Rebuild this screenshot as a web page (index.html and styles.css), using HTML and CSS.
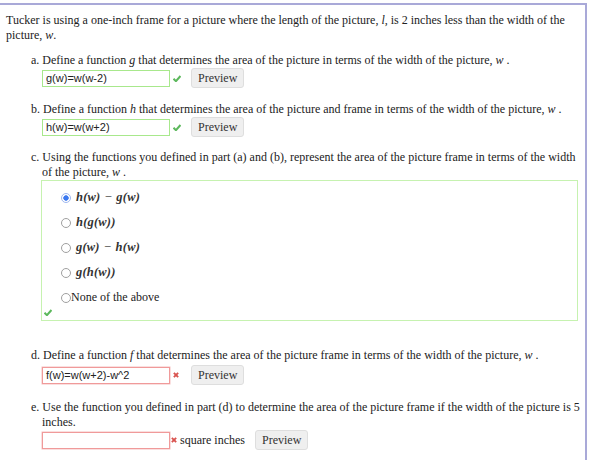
FILE: index.html
```html
<!DOCTYPE html>
<html>
<head>
<meta charset="utf-8">
<link rel="stylesheet" href="styles.css">
</head>
<body>
<div class="frame">
  <p class="intro">Tucker is using a one-inch frame for a picture where the length of the picture, <i>l</i>, is 2 inches less than the width of the picture, <i class="mv">w</i>.</p>

  <div class="part part-a">
    <p class="q">a. Define a function <i class="mv">g</i> that determines the area of the picture in terms of the width of the picture, <i class="mv">w</i> .</p>
    <div class="row">
      <span class="inp ok">g(w)=w(w-2)</span>
      <span class="mark check"><svg width="8" height="7" viewBox="0 0 9 8"><path d="M0.5 4.2 L3.3 7 L8.5 1.2" fill="none" stroke="#5cb85c" stroke-width="2.4"/></svg></span>
      <span class="btn">Preview</span>
    </div>
  </div>

  <div class="part part-b">
    <p class="q">b. Define a function <i class="mv">h</i> that determines the area of the picture and frame in terms of the width of the picture, <i class="mv">w</i> .</p>
    <div class="row">
      <span class="inp ok">h(w)=w(w+2)</span>
      <span class="mark check"><svg width="8" height="7" viewBox="0 0 9 8"><path d="M0.5 4.2 L3.3 7 L8.5 1.2" fill="none" stroke="#5cb85c" stroke-width="2.4"/></svg></span>
      <span class="btn">Preview</span>
    </div>
  </div>

  <div class="part part-c">
    <p class="q">c. Using the functions you defined in part (a) and (b), represent the area of the picture frame in terms of the width of the picture, <i class="mv">w</i> .</p>
    <div class="choices">
      <label class="opt"><span class="radio on"></span><span class="math">h(w) <span class="op">−</span> g(w)</span></label>
      <label class="opt"><span class="radio"></span><span class="math">h(g(w))</span></label>
      <label class="opt"><span class="radio"></span><span class="math">g(w) <span class="op">−</span> h(w)</span></label>
      <label class="opt"><span class="radio"></span><span class="math">g(h(w))</span></label>
      <label class="opt none"><span class="radio"></span><span class="txt">None of the above</span></label>
      <span class="mark check chk-c"><svg width="8" height="7" viewBox="0 0 9 8"><path d="M0.5 4.2 L3.3 7 L8.5 1.2" fill="none" stroke="#5cb85c" stroke-width="2.4"/></svg></span>
    </div>
  </div>

  <div class="part part-d">
    <p class="q">d. Define a function <i class="mv">f</i> that determines the area of the picture frame in terms of the width of the picture, <i class="mv">w</i> .</p>
    <div class="row row-d">
      <span class="inp bad">f(w)=w(w+2)-w^2</span>
      <span class="mark cross"><svg width="6" height="6" viewBox="0 0 7 7"><path d="M1 1 L6 6 M6 1 L1 6" fill="none" stroke="#d9534f" stroke-width="2.2"/></svg></span>
      <span class="btn">Preview</span>
    </div>
  </div>

  <div class="part part-e">
    <p class="q">e. Use the function you defined in part (d) to determine the area of the picture frame if the width of the picture is 5 inches.</p>
    <div class="row">
      <span class="inp bad"></span>
      <span class="mark cross tight"><svg width="6" height="6" viewBox="0 0 7 7"><path d="M1 1 L6 6 M6 1 L1 6" fill="none" stroke="#d9534f" stroke-width="2.2"/></svg></span>
      <span class="unit">square inches</span>
      <span class="btn">Preview</span>
    </div>
  </div>
</div>
</body>
</html>
```
FILE: styles.css
```css
html, body {
  margin: 0;
  padding: 0;
  background: #ffffff;
}

body {
  font-family: "Liberation Serif", "Times New Roman", serif;
  font-size: 12px;
  line-height: 15px;
  color: #222222;
}

.frame {
  margin: 3px 3px 0 -2px;
  border: 2px solid #a9a9d8;
  border-bottom: none;
  padding: 8px 4px 40px 6px;
  height: 460px;
  box-sizing: border-box;
}

p {
  margin: 0;
}

.mv {
  font-style: italic;
}

.intro {
  padding-right: 13px;
}

.part {
  padding-left: 36px;
}

.q {
  text-indent: -11px;
}

.part-a {
  margin-top: 10px;
}

.part-b {
  margin-top: 14px;
}

.part-c {
  margin-top: 13px;
}

.part-c .q {
  padding-right: 0;
}

.part-d {
  margin-top: 27px;
}

.part-e {
  margin-top: 15px;
}

.row {
  display: flex;
  align-items: center;
  height: 20px;
}

.row-d {
  margin-top: 2px;
}

.inp {
  display: block;
  box-sizing: border-box;
  width: 128px;
  height: 17px;
  padding: 0 3px;
  font-family: "Liberation Sans", Arial, sans-serif;
  font-size: 11px;
  line-height: 15px;
  color: #222;
  background: #fff;
}

.inp.ok {
  border: 1px solid #a8e88c;
}

.inp.bad {
  border: 1px solid #f09a9a;
  box-shadow: 0 0 0 0.5px #f6c0c0;
}

.mark {
  display: flex;
  align-items: center;
  width: 21px;
  padding-left: 3px;
  box-sizing: border-box;
}

.mark svg {
  display: block;
}

.mark.tight {
  width: 10px;
  padding-left: 1px;
}

.unit {
  margin-right: 10px;
}

.btn {
  display: block;
  box-sizing: border-box;
  height: 20px;
  padding: 0 6px;
  font-size: 12px;
  line-height: 18px;
  color: #333;
  background: #efefef;
  border: 1px solid #dedede;
  border-radius: 3px;
}

.choices {
  position: relative;
  border: 1px solid #c6f2b0;
  height: 141px;
  box-sizing: border-box;
  padding: 4px 0 0 19px;
  margin-left: -1px;
  margin-right: 3px;
}

.opt {
  display: flex;
  align-items: center;
  height: 25px;
}

.radio {
  display: block;
  box-sizing: border-box;
  width: 10px;
  height: 10px;
  border-radius: 50%;
  border: 1px solid #a0a0a0;
  background: #fff;
  margin-right: 5px;
}

.radio.on {
  border-color: #9fb8f0;
  background: radial-gradient(circle, #3a78f0 0 2.4px, #ffffff 3px);
}

.none .radio {
  margin-right: 0;
}

.math {
  font-family: "Liberation Serif", "Times New Roman", serif;
  font-style: italic;
  font-weight: bold;
  font-size: 12.5px;
  color: #333;
  letter-spacing: 0.2px;
}

.op {
  font-style: normal;
  font-weight: normal;
  padding: 0 1px;
}

.txt {
  font-size: 12px;
}

.chk-c {
  position: absolute;
  left: 2px;
  bottom: 4px;
  width: 9px;
  padding-left: 0;
}
```
